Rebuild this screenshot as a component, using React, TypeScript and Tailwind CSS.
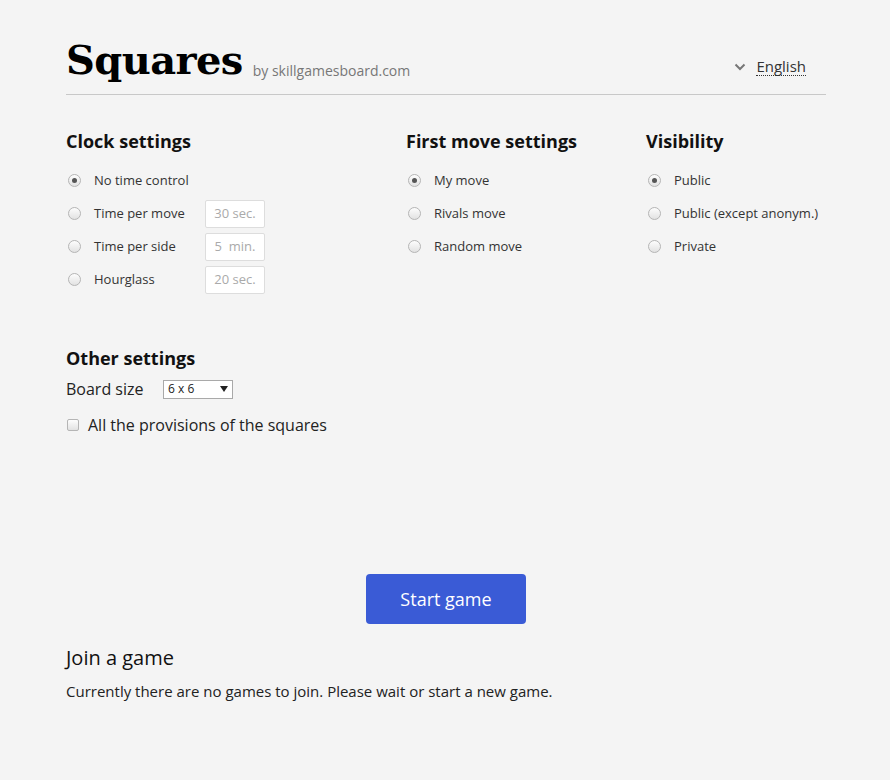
import { useState } from "react";

const CLOCK = [
  { label: "No time control", value: "" },
  { label: "Time per move", value: "30 sec." },
  { label: "Time per side", value: "5  min." },
  { label: "Hourglass", value: "20 sec." },
];
const FIRST = ["My move", "Rivals move", "Random move"];
const VISIBILITY = ["Public", "Public (except anonym.)", "Private"];

function Radio({ checked }: { checked: boolean }) {
  return (
    <span className="w-[13px] h-[13px] rounded-full border border-[#b5b5b5] bg-gradient-to-b from-[#fdfdfd] to-[#e2e2e2] flex items-center justify-center shrink-0">
      {checked && <span className="w-[5px] h-[5px] rounded-full bg-[#555]" />}
    </span>
  );
}

function RadioGroup({ items, checked, onPick }: { items: string[]; checked: number; onPick: (i: number) => void }) {
  return (
    <div className="flex flex-col">
      {items.map((label, i) => (
        <label key={label} onClick={() => onPick(i)} className="flex items-center h-[33px] cursor-pointer">
          <span className="w-[28px] pl-[2px]">
            <Radio checked={checked === i} />
          </span>
          <span className="text-[13px] text-[#333]">{label}</span>
        </label>
      ))}
    </div>
  );
}

export default function App() {
  const [clock, setClock] = useState(0);
  const [first, setFirst] = useState(0);
  const [vis, setVis] = useState(0);

  return (
    <main className="min-h-screen bg-[#f4f4f4] font-['Open_Sans',sans-serif] text-[#222]">
      <div className="w-[760px] ml-[66px] pt-[34px]">
        <header className="flex items-end justify-between border-b border-[#c8c8c8] pb-[8px]">
          <div className="flex items-end gap-[10px]">
            <h1 className="font-['DejaVu_Serif',serif] font-bold text-[40px] leading-[52px] tracking-[-0.6px] text-black">Squares</h1>
            <span className="text-[14px] text-[#777] pb-[5px]">by skillgamesboard.com</span>
          </div>
          <div className="flex items-center gap-[10px] pb-[10px] pr-[20px]">
            <svg width="12" height="8" viewBox="0 0 12 8"><path d="M1.5 1.5 6 6l4.5-4.5" fill="none" stroke="#777" strokeWidth="2" /></svg>
            <span className="text-[15px] text-[#333] border-b border-dotted border-[#333] leading-[18px]">English</span>
          </div>
        </header>

        <section className="flex pt-[34px]">
          <div className="w-[340px]">
            <h2 className="text-[18px] font-bold text-[#111] leading-[24px] mb-[11px]">Clock settings</h2>
            <div className="flex flex-col">
              {CLOCK.map((c, i) => (
                <label key={c.label} onClick={() => setClock(i)} className="flex items-center h-[33px] cursor-pointer">
                  <span className="w-[28px] pl-[2px]">
                    <Radio checked={clock === i} />
                  </span>
                  <span className="text-[13px] text-[#333] w-[111px]">{c.label}</span>
                  {c.value && (
                    <span className="w-[60px] h-[28px] border border-[#ddd] bg-white rounded-[2px] flex items-center justify-center text-[13px] text-[#aaa] whitespace-pre">
                      {c.value}
                    </span>
                  )}
                </label>
              ))}
            </div>
          </div>
          <div className="w-[240px]">
            <h2 className="text-[18px] font-bold text-[#111] leading-[24px] mb-[11px]">First move settings</h2>
            <RadioGroup items={FIRST} checked={first} onPick={setFirst} />
          </div>
          <div>
            <h2 className="text-[18px] font-bold text-[#111] leading-[24px] mb-[11px]">Visibility</h2>
            <RadioGroup items={VISIBILITY} checked={vis} onPick={setVis} />
          </div>
        </section>

        <section className="pt-[50px]">
          <h2 className="text-[18px] font-bold text-[#111] leading-[24px] mb-[6px]">Other settings</h2>
          <div className="flex items-center h-[26px]">
            <span className="text-[16px] text-[#222] w-[97px]">Board size</span>
            <span className="w-[70px] h-[19px] border border-[#a9a9a9] bg-white flex items-center justify-between px-[4px] text-[12px] text-[#222]">
              6 x 6
              <svg width="8" height="6" viewBox="0 0 8 6"><path d="M0 0h8L4 6z" fill="#222" /></svg>
            </span>
          </div>
          <label className="flex items-center h-[26px] mt-[10px]">
            <span className="w-[12px] h-[12px] border border-[#b5b5b5] rounded-[2px] bg-gradient-to-b from-[#fdfdfd] to-[#e2e2e2] ml-[1px] mr-[9px]" />
            <span className="text-[16px] text-[#222]">All the provisions of the squares</span>
          </label>
        </section>

        <div className="flex justify-center pt-[136px]">
          <button className="w-[160px] h-[50px] bg-[#3a5bd6] rounded-[4px] text-white text-[18px]">Start game</button>
        </div>

        <section className="pt-[20px]">
          <h2 className="text-[20px] text-[#111] leading-[28px]">Join a game</h2>
          <p className="text-[15px] text-[#222] mt-[8px]">Currently there are no games to join. Please wait or start a new game.</p>
        </section>
      </div>
    </main>
  );
}
